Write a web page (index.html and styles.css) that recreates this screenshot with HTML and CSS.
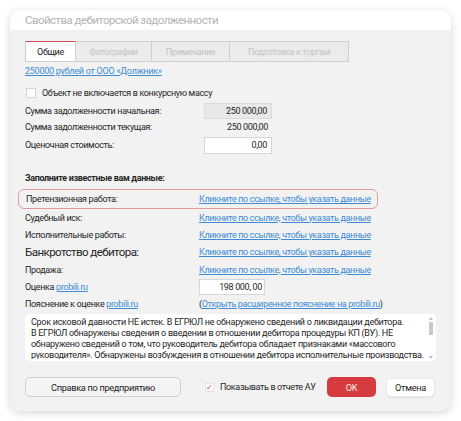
FILE: index.html
```html
<!DOCTYPE html>
<html lang="ru">
<head>
<meta charset="utf-8">
<title>Свойства дебиторской задолженности</title>
<link rel="stylesheet" href="styles.css">
</head>
<body>
<div class="dialog">
  <div class="title">Свойства дебиторской задолженности</div>
  <div class="body">
    <div class="tabs">
      <div class="tab active">Общие</div>
      <div class="tab t-photo">Фотографии</div>
      <div class="tab t-note">Примечание</div>
      <div class="tab t-prep">Подготовка к торгам</div>
    </div>
    <div class="top-link"><a class="link" href="#">250000 рублей от ООО «Должник»</a></div>
    <div class="check-row"><span class="box"></span><span>Объект не включается в конкурсную массу</span></div>
    <div class="sums">
      <div class="sum-row r1"><span class="label">Сумма задолженности начальная:</span><span class="field gray">250 000,00</span></div>
      <div class="sum-row r2"><span class="label">Сумма задолженности текущая:</span><span class="field plain">250 000,00</span></div>
      <div class="sum-row r3"><span class="label">Оценочная стоимость:</span><span class="field white">0,00</span></div>
    </div>
    <div class="section-title">Заполните известные вам данные:</div>
    <div class="data">
      <div class="data-row highlight"><span class="label">Претензионная работа:</span><a class="link" href="#">Кликните по ссылке, чтобы указать данные</a></div>
      <div class="data-row"><span class="label">Судебный иск:</span><a class="link" href="#">Кликните по ссылке, чтобы указать данные</a></div>
      <div class="data-row"><span class="label">Исполнительные работы:</span><a class="link" href="#">Кликните по ссылке, чтобы указать данные</a></div>
      <div class="data-row tall"><span class="label big">Банкротство дебитора:</span><a class="link" href="#">Кликните по ссылке, чтобы указать данные</a></div>
      <div class="data-row"><span class="label">Продажа:</span><a class="link" href="#">Кликните по ссылке, чтобы указать данные</a></div>
      <div class="data-row"><span class="label">Оценка <a class="link" href="#">probili.ru</a></span><span class="field est">198 000, 00</span></div>
      <div class="data-row"><span class="label">Пояснение к оценке <a class="link" href="#">probili.ru</a></span><span class="paren">(<a class="link" href="#">Открыть расширенное пояснение на probili.ru</a>)</span></div>
    </div>
    <div class="textarea">
      <div class="ta-text">Срок исковой давности НЕ истек. В ЕГРЮЛ не обнаружено сведений о ликвидации дебитора.<br>В ЕГРЮЛ обнаружены сведения о введении в отношении дебитора процедуры КП (ВУ). НЕ<br>обнаружено сведений о том, что руководитель дебитора обладает признаками «массового<br>руководителя». Обнаружены возбуждения в отношении дебитора исполнительные производства.</div>
      <div class="scrollbar"><span class="arrow up"></span><span class="thumb"></span><span class="track"></span><span class="arrow down"></span></div>
    </div>
    <div class="footer">
      <button class="btn help">Справка по предприятию</button>
      <div class="show"><span class="rbox">✓</span><span>Показывать в отчете АУ</span></div>
      <button class="btn ok">OK</button>
      <button class="btn cancel">Отмена</button>
    </div>
  </div>
</div>
</body>
</html>
```
FILE: styles.css
```css
* { box-sizing: border-box; }
html, body { margin: 0; padding: 0; background: #ffffff; }
body {
  width: 461px;
  height: 421px;
  padding: 10px 10px 10px 10px;
  font-family: Roboto, "Liberation Sans", Arial, sans-serif;
  font-size: 9px;
  letter-spacing: -0.35px;
  color: #262626;
}
.dialog {
  width: 441px;
  height: 401px;
  border-radius: 10px;
  background: #f2f2f2;
  box-shadow: 0 2px 9px rgba(0,0,0,0.16);
  overflow: hidden;
}
.title {
  height: 20px;
  background: #ffffff;
  color: #b4b4b4;
  font-size: 11.5px;
  letter-spacing: -0.55px;
  line-height: 20px;
  padding-left: 15px;
}
.body { padding: 11px 15px 0 15px; }
.tabs { display: flex; height: 21px; }
.tab {
  height: 21px;
  border: 1px solid #cfcfcf;
  border-left: none;
  background: #ebebeb;
  color: #c3c3c3;
  display: flex;
  align-items: center;
  justify-content: center;
  font-size: 9px;
}
.tab.active {
  width: 51px;
  background: #ffffff;
  color: #222;
  border-left: 1px solid #cfcfcf;
  border-top: 1px solid #d24c4c;
}
.t-photo { width: 76px; }
.t-note { width: 78px; }
.t-prep { width: 119px; }
.link { color: #3d8bd6; text-decoration: underline; }
.top-link { margin-top: 3px; height: 13px; line-height: 13px; letter-spacing: -0.25px; }
.check-row {
  margin-top: 9px;
  height: 11px;
  display: flex;
  align-items: center;
  gap: 6px;
  padding-left: 1px;
}
.box {
  width: 10px; height: 10px;
  background: #fff;
  border: 1px solid #d6d6d6;
}
.sums { margin-top: 5px; }
.sum-row { display: flex; align-items: center; }
.sum-row .label { width: 179px; }
.r1 { height: 16px; }
.r2 { height: 16px; }
.r3 { height: 18px; margin-top: 1px; }
.field {
  width: 68px;
  text-align: right;
  padding-right: 4px;
  line-height: 14px;
}
.field.gray { height: 16px; background: #e8e8e8; border: 1px solid #dadada; line-height: 14px; }
.field.white { height: 17px; background: #fff; border: 1px solid #d6d6d6; line-height: 15px; }
.section-title { margin-top: 17px; height: 14px; line-height: 14px; font-weight: bold; }
.data { margin-top: 4px; }
.data-row { display: flex; align-items: center; height: 17px; white-space: nowrap; }
.data-row .label { width: 174px; }
.data-row.highlight {
  height: 20px;
  margin-left: -7px;
  width: 360px;
  padding-left: 7px;
  border: 1px solid #e39b9b;
  border-radius: 6px;
}
.data-row.highlight .label { width: 173px; }
.data-row.tall { height: 18px; }
.label.big { font-size: 11.6px; letter-spacing: -0.6px; }
.field.est {
  width: 66px; height: 16px;
  background: #fff; border: 1px solid #d6d6d6;
  text-align: right; padding: 0 2px 0 0; line-height: 14px;
}
.textarea {
  margin-top: 2px;
  height: 47px;
  width: 411px;
  background: #fff;
  border-radius: 5px;
  display: flex;
  padding: 3px 3px 2px 6px;
}
.ta-text {
  flex: 1;
  font-size: 9px;
  letter-spacing: -0.28px;
  line-height: 11px;
  overflow: hidden;
  white-space: nowrap;
}
.scrollbar {
  width: 5px;
  display: flex;
  flex-direction: column;
  align-items: center;
}
.arrow { width: 0; height: 0; border-left: 2px solid transparent; border-right: 2px solid transparent; }
.arrow.up { border-bottom: 3px solid #bdbdbd; }
.arrow.down { border-top: 3px solid #bdbdbd; }
.thumb { width: 4px; height: 13px; background: #c8c8c8; margin-top: 2px; }
.track { flex: 1; }
.footer {
  margin-top: 16px;
  display: flex;
  align-items: center;
  height: 20px;
}
.btn {
  font-family: inherit;
  letter-spacing: -0.3px;
  height: 20px;
  border-radius: 5px;
  font-size: 9.2px;
  padding: 0;
  color: #222;
}
.btn.help { width: 156px; background: #f4f4f4; border: 1px solid #cfcfcf; }
.show { display: flex; align-items: center; margin-left: 24px; gap: 6px; width: 122px; }
.rbox {
  width: 9px; height: 9px; background: #fff; border: 1px solid #e3e3e3;
  color: #d23c3c; font-size: 8px; line-height: 8px; text-align: center; letter-spacing: 0;
}
.btn.ok { width: 49px; background: #d63b40; border: none; color: #fdeaea; }
.btn.cancel { width: 49px; margin-left: 10px; background: #fff; border: 1px solid #e8e8e8; height: 19px; box-shadow: 0 1px 2px rgba(0,0,0,0.06); }
```
